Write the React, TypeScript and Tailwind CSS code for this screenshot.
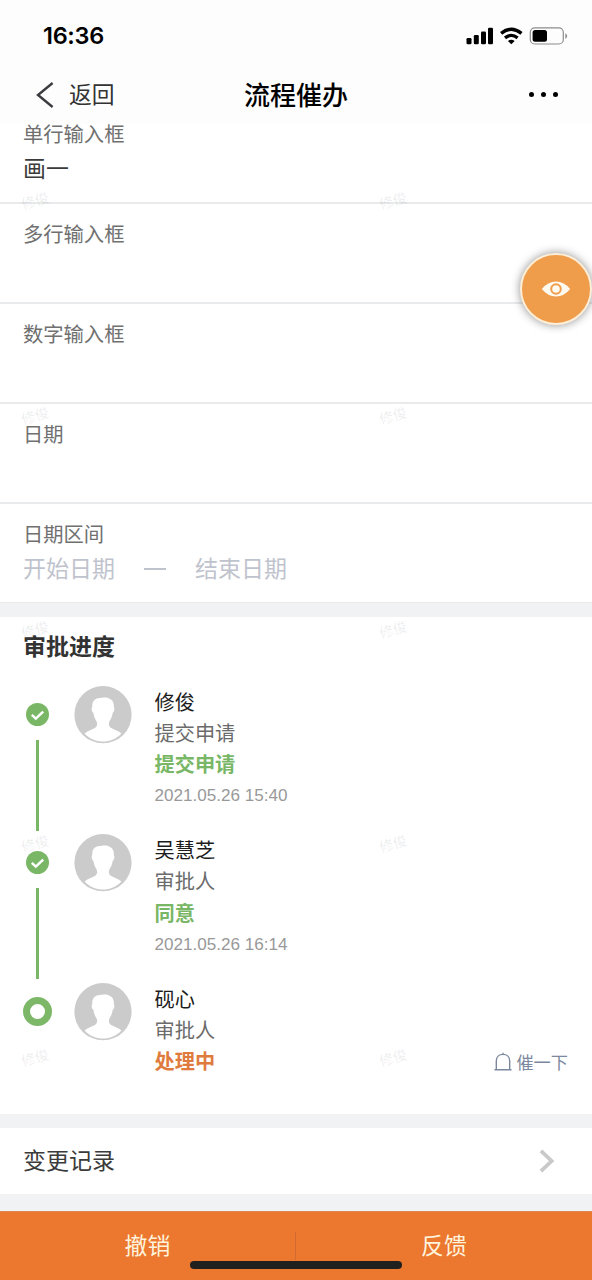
const watermarkRows = [200, 415, 629, 843, 1057];

const fields = [
  { label: '单行输入框', value: '画一' },
  { label: '多行输入框', value: '' },
  { label: '数字输入框', value: '' },
  { label: '日期', value: '' },
];

type Step = {
  name: string;
  role: string;
  status: string;
  time?: string;
  pending?: boolean;
};

const steps: Step[] = [
  { name: '修俊', role: '提交申请', status: '提交申请', time: '2021.05.26 15:40' },
  { name: '吴慧芝', role: '审批人', status: '同意', time: '2021.05.26 16:14' },
  { name: '砚心', role: '审批人', status: '处理中', pending: true },
];

function StatusBar() {
  return (
    <div className="flex h-[70px] items-center justify-between pl-[43px] pr-[24px]">
      <span className="pt-[2px] font-[Inter] text-[23.5px] leading-[30px] font-semibold tracking-[-0.3px] text-black">16:36</span>
      <svg width="102" height="20" viewBox="0 0 102 20" className="mt-px block">
        <rect x="0.5" y="12" width="5" height="6.2" rx="1.3" />
        <rect x="7.8" y="9" width="5" height="9.2" rx="1.3" />
        <rect x="15" y="5.5" width="5" height="12.7" rx="1.3" />
        <rect x="22" y="1.7" width="5" height="16.5" rx="1.3" />
        <g fill="none" stroke="#000" strokeWidth="3.3">
          <path d="M35.1 7.4 Q45.3 -0.9 55.5 7.4" />
          <path d="M39 11.9 Q45.3 6.9 51.6 11.9" />
        </g>
        <path d="M41.9 14.9 Q45.3 12.5 48.7 14.9 L45.3 18.3 Z" />
        <rect x="64.3" y="1.8" width="33" height="16.2" rx="4.5" fill="none" stroke="#8c8c8c" strokeWidth="1.2" />
        <rect x="66.6" y="4" width="14.4" height="11.8" rx="2.5" />
        <path d="M99.3 7.3 Q101.2 8.2 101.2 10.1 Q101.2 12 99.3 12.9 Z" fill="#8c8c8c" />
      </svg>
    </div>
  );
}

function NavBar() {
  return (
    <div className="grid h-[54px] grid-cols-3 items-start">
      <div className="flex h-[49px] items-center pl-[36px]">
        <svg width="18" height="26" viewBox="0 0 18 26" fill="none" stroke="#3c3c40" strokeWidth="2.4">
          <path d="M16.6 1 L2 13 L16.6 25" />
        </svg>
        <span className="ml-[15px] pb-px text-[22.8px] leading-[32px] text-[#333]">返回</span>
      </div>
      <h1 className="text-center text-[26px] leading-[47px] font-medium text-black">流程催办</h1>
      <div className="flex h-[49px] items-center justify-end gap-[7px] pr-[34px]">
        <i className="size-[5px] rounded-full bg-black" />
        <i className="size-[5px] rounded-full bg-black" />
        <i className="size-[5px] rounded-full bg-black" />
      </div>
    </div>
  );
}

function Avatar() {
  return (
    <svg width="58" height="58" viewBox="0 0 58 58" className="block">
      <circle cx="29" cy="28.7" r="28.6" fill="#cbcbcb" />
      <path
        fill="#fff"
        d="M10.6 47.4 C13.5 44.6 17.5 44 20.8 42 C23.4 40.2 23.8 37.6 22.2 34.8 C20.4 32.2 19.8 29.6 19.4 26.8 C17.6 25.6 17.2 22.6 18.3 20.8 C17.8 15 21.5 11.6 26.5 12 C29.5 10.8 40.8 10.6 39.8 21 C40.9 22.8 40.3 25.8 38.7 26.8 C38.2 29.8 37.6 32.2 35.8 34.8 C34.2 37.6 34.6 40.2 37.2 42 C40.5 44 44.5 44.6 47.4 47.4 C37.4 58.2 20.6 58.2 10.6 47.4 Z"
      />
    </svg>
  );
}

function Marker({ pending }: { pending?: boolean }) {
  if (pending) {
    return <i className="mt-[14px] size-[29px] shrink-0 rounded-full border-7 border-[#7db869] bg-white" />;
  }
  return (
    <>
      <svg width="23" height="23" viewBox="0 0 23 23" className="mt-[17px] block shrink-0">
        <circle cx="11.5" cy="11.5" r="11.5" fill="#79b766" />
        <path d="M5.8 11.8 L9.8 15.6 L17.2 8.6" fill="none" stroke="#fff" strokeWidth="2.5" />
      </svg>
      <i className="mt-[14px] h-[91px] w-[3px] bg-[#79b766]" />
    </>
  );
}

function StepItem({ step }: { step: Step }) {
  return (
    <li className="flex h-[148.5px] pl-[22px]">
      <div className="flex w-[30px] flex-col items-center">
        <Marker pending={step.pending} />
      </div>
      <div className="ml-[22px]">
        <Avatar />
      </div>
      <div className="ml-[22.5px] flex flex-1 flex-col text-[20.2px] leading-[31.4px]">
        <span className="text-[#1c1c1c]">{step.name}</span>
        <span className="text-[#6b6b6b]">{step.role}</span>
        <div className="flex justify-between pr-[24px]">
          <span className={step.pending ? 'font-bold text-[#e07b3e]' : 'font-bold text-[#79b766]'}>{step.status}</span>
          {step.pending && (
            <button className="flex items-center pt-px text-[17.2px] text-[#7c889e]">
              <svg width="18" height="20" viewBox="0 0 18 20" fill="none" stroke="#7c889e" strokeWidth="1.4" className="mr-[4px]">
                <path d="M0.5 17.8 H17.5 M2.3 17.8 V9 C2.3 5 5 2.4 9 2.4 C13 2.4 15.7 5 15.7 9 V17.8 M9 2.4 V0.8" />
              </svg>
              催一下
            </button>
          )}
        </div>
        {step.time && <span className="pt-[0.5px] font-['Liberation_Sans'] text-[17.1px] text-[#999]">{step.time}</span>}
      </div>
    </li>
  );
}

export default function App() {
  return (
    <div className="relative flex h-[1280px] w-[592px] flex-col overflow-hidden bg-white font-['Noto_Sans_CJK_SC',sans-serif]">
      <header className="h-[124px] shrink-0 bg-[#fdfdfd]">
        <StatusBar />
        <NavBar />
      </header>

      <section className="-mt-[20px] shrink-0">
        {fields.map((field) => (
          <div key={field.label} className="flex h-[100px] flex-col border-b-2 border-[#e9eaec] pt-[15px] pl-[23px]">
            <span className="text-[20.3px] leading-[29px] text-[#707070]">{field.label}</span>
            <span className="text-[22.9px] leading-[39px] text-[#3b3b3b]">{field.value}</span>
          </div>
        ))}
        <div className="flex h-[98px] flex-col pt-[15px] pl-[23px]">
          <span className="text-[20.3px] leading-[29px] text-[#707070]">日期区间</span>
          <div className="flex text-[23px] leading-[39px] text-[#bfc3cd]">
            <span>开始日期</span>
            <span className="mx-[29px] flex w-[22px] items-center">
              <i className="mt-[3px] h-[1.5px] w-full bg-[#bfc3cd]" />
            </span>
            <span>结束日期</span>
          </div>
        </div>
      </section>

      <div className="h-[15px] shrink-0 border-t border-[#e9eaec] bg-[#f1f2f4]" />

      <section className="h-[497px] shrink-0">
        <h2 className="pt-[9px] pl-[23px] text-[23px] leading-[39px] font-bold text-[#333]">审批进度</h2>
        <ul className="pt-[20.5px]">
          {steps.map((step) => (
            <StepItem key={step.name} step={step} />
          ))}
        </ul>
      </section>

      <div className="h-[14px] shrink-0 bg-[#f1f2f4]" />

      <section className="flex h-[66px] shrink-0 items-center justify-between pr-[37px] pl-[23px]">
        <span className="pb-[4px] text-[23px] leading-[40px] text-[#3b3b3b]">变更记录</span>
        <svg width="16" height="24" viewBox="0 0 16 24" fill="none" stroke="#c9c9c9" strokeWidth="3.8">
          <path d="M2 1.8 L12.6 12 L2 22.2" />
        </svg>
      </section>

      <div className="h-[17px] shrink-0 bg-[#f1f2f4]" />

      <footer className="flex h-[69px] shrink-0 border-t border-[#d98550] bg-[#ec772f] text-[22.9px] leading-[64px] text-[#fff3dc]">
        <button className="h-[64px] w-[295px]">撤销</button>
        <i className="mt-[20px] h-[28px] w-px bg-[#d36b30]" />
        <button className="h-[64px] w-[296px]">反馈</button>
      </footer>

      <div className="absolute top-[1261px] left-[190px] z-10 h-[8px] w-[212px] rounded-full bg-[#20201f]" />

      {watermarkRows.map((top) => (
        <div
          key={top}
          className="pointer-events-none absolute left-[21px] flex w-[386px] -translate-y-1/2 justify-between text-[14px] leading-[20px] font-bold text-black/6"
          style={{ top }}
        >
          <span className="-rotate-15">修俊</span>
          <span className="-rotate-15">修俊</span>
        </div>
      ))}

      <button className="absolute top-[253px] left-[520px] z-10 flex size-[72px] items-center justify-center rounded-full border-2 border-[#fdeed8] bg-[#ef9c4b] shadow-[0_0_10px_rgba(0,0,0,0.45)]">
        <svg width="30" height="18" viewBox="0 0 30 18">
          <path d="M0.8 9 Q7 1.5 15 1.5 Q23 1.5 29.2 9 Q23 16.5 15 16.5 Q7 16.5 0.8 9 Z" fill="#fffaf0" />
          <circle cx="15" cy="9" r="4.8" fill="#fffaf0" stroke="#ef9c4b" strokeWidth="2" />
        </svg>
      </button>
    </div>
  );
}
